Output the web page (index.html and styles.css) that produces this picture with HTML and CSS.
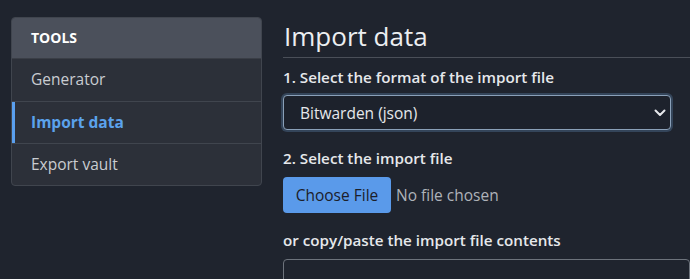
FILE: index.html
```html
<!DOCTYPE html>
<html>
<head>
<meta charset="utf-8">
<link rel="stylesheet" href="styles.css">
</head>
<body>
<div class="page">
  <aside class="card">
    <div class="card-header">Tools</div>
    <a class="item">Generator</a>
    <a class="item active">Import data</a>
    <a class="item">Export vault</a>
  </aside>
  <main class="main">
    <h1 class="title">Import data</h1>
    <label class="label">1. Select the format of the import file</label>
    <div class="select">
      <span>Bitwarden (json)</span>
      <svg class="chev" width="12" height="8" viewBox="0 0 12 8"><path d="M1.5 1.5 L6 6 L10.5 1.5" fill="none" stroke="#e6e8eb" stroke-width="2" stroke-linecap="round" stroke-linejoin="round"/></svg>
    </div>
    <label class="label second">2. Select the import file</label>
    <div class="file">
      <span class="btn">Choose File</span>
      <span class="nofile">No file chosen</span>
    </div>
    <label class="label third">or copy/paste the import file contents</label>
    <div class="textarea"></div>
  </main>
</div>
</body>
</html>
```
FILE: styles.css
```css
html, body {
  margin: 0;
  padding: 0;
  background: #1f242e;
  font-family: "Open Sans", "Noto Sans", sans-serif;
  color: #e4e6ea;
  overflow: hidden;
}
.page {
  display: flex;
  padding: 17px 0 0 11px;
  gap: 21px;
}
.card {
  width: 249px;
  flex: none;
  border: 1px solid #40454e;
  border-radius: 4px;
  background: #2c3039;
  overflow: hidden;
  align-self: flex-start;
}
.card-header {
  background: #4b505b;
  height: 41px;
  box-sizing: border-box;
  padding: 10px 19px 0;
  font-weight: 700;
  font-size: 14px;
  text-transform: uppercase;
  color: #ffffff;
  border-bottom: 1px solid #3a3e46;
}
.item {
  display: block;
  height: 42px;
  box-sizing: border-box;
  padding: 9px 19px 0;
  font-size: 15.5px;
  color: #c9ccd1;
  border-top: 1px solid #40454e;
}
.card-header + .item { border-top: none; }
.item.active {
  color: #5ba2ec;
  font-weight: 700;
  box-shadow: inset 3px 0 0 #5a9fee;
}
.main {
  flex: 1;
  display: flex;
  flex-direction: column;
}
.title {
  margin: 0;
  font-size: 26px;
  font-weight: 400;
  line-height: 34px;
  padding: 2px 0 4px 1px;
  color: #eceef1;
  border-bottom: 1px solid #4a4f58;
}
.label {
  font-size: 15.2px;
  font-weight: 600;
  margin-top: 9px;
  line-height: 20px;
  color: #e6e8eb;
}
.select {
  margin-top: 8px;
  width: 388px;
  height: 35px;
  box-sizing: border-box;
  border: 1px solid #8aa0b8;
  border-radius: 4px;
  box-shadow: 0 0 0 2px #34455a;
  display: flex;
  align-items: center;
  justify-content: space-between;
  padding: 0 4px 0 16px;
  font-size: 15.5px;
  color: #e6e8eb;
  background: #1d222c;
}
.label.second { margin-top: 18px; }
.file {
  margin-top: 9px;
  display: flex;
  align-items: center;
  gap: 5px;
}
.btn {
  background: #5a9aea;
  color: #1c2029;
  border-radius: 4px;
  height: 36px;
  width: 108px;
  box-sizing: border-box;
  display: flex;
  align-items: center;
  justify-content: center;
  font-size: 15.5px;
}
.nofile {
  font-size: 15.5px;
  color: #aeb2b9;
}
.label.third { margin-top: 17px; }
.textarea {
  margin-top: 9px;
  height: 40px;
  border: 1px solid #6d737c;
  border-radius: 4px;
}
```
